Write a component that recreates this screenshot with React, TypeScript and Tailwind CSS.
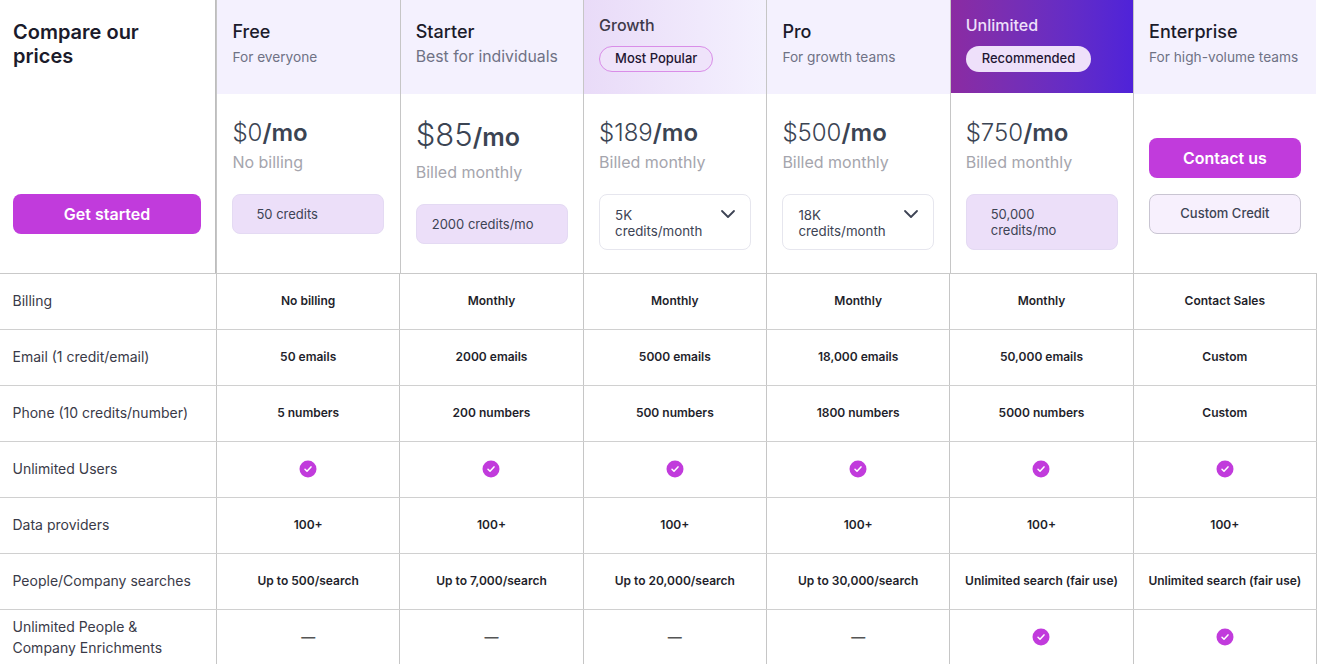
import { ChevronDown } from 'lucide-react';

interface Plan {
  name: string;
  sub?: string;
  badge?: string;
  price?: string;
  billing?: string;
  credits?: string;
  kind?: 'flat' | 'select';
  big?: boolean;
}

const plans: Plan[] = [
  { name: 'Free', sub: 'For everyone', price: '$0', billing: 'No billing', credits: '50 credits', kind: 'flat' },
  { name: 'Starter', sub: 'Best for individuals', price: '$85', billing: 'Billed monthly', credits: '2000 credits/mo', kind: 'flat', big: true },
  { name: 'Growth', badge: 'Most Popular', price: '$189', billing: 'Billed monthly', credits: '5K credits/month', kind: 'select' },
  { name: 'Pro', sub: 'For growth teams', price: '$500', billing: 'Billed monthly', credits: '18K credits/month', kind: 'select' },
  { name: 'Unlimited', badge: 'Recommended', price: '$750', billing: 'Billed monthly', credits: '50,000 credits/mo', kind: 'flat' },
  { name: 'Enterprise', sub: 'For high-volume teams' },
];

const CHECK = 'check';
const DASH = 'dash';

const rows: { label: string; cells: string[] }[] = [
  { label: 'Billing', cells: ['No billing', 'Monthly', 'Monthly', 'Monthly', 'Monthly', 'Contact Sales'] },
  { label: 'Email (1 credit/email)', cells: ['50 emails', '2000 emails', '5000 emails', '18,000 emails', '50,000 emails', 'Custom'] },
  { label: 'Phone (10 credits/number)', cells: ['5 numbers', '200 numbers', '500 numbers', '1800 numbers', '5000 numbers', 'Custom'] },
  { label: 'Unlimited Users', cells: [CHECK, CHECK, CHECK, CHECK, CHECK, CHECK] },
  { label: 'Data providers', cells: ['100+', '100+', '100+', '100+', '100+', '100+'] },
  { label: 'People/Company searches', cells: ['Up to 500/search', 'Up to 7,000/search', 'Up to 20,000/search', 'Up to 30,000/search', 'Unlimited search (fair use)', 'Unlimited search (fair use)'] },
  { label: 'Unlimited People & Company Enrichments', cells: [DASH, DASH, DASH, DASH, CHECK, CHECK] },
];

function CheckDot() {
  return (
    <svg width="18" height="18" viewBox="0 0 18 18">
      <circle cx="9" cy="9" r="8.5" fill="#c13bdc" />
      <path d="M6 9.3l2 2 4-4.4" fill="none" stroke="#fff" strokeWidth="1.5" strokeLinecap="round" strokeLinejoin="round" />
    </svg>
  );
}

function PlanBand({ plan }: { plan: Plan }) {
  if (plan.badge) {
    const dark = plan.name === 'Unlimited';
    return (
      <div
        className={
          dark
            ? 'h-[93px] mb-px pl-[15px] pr-[15.5px] pt-[15px] bg-gradient-to-r from-[#8b2ba2] to-[#4f22d9]'
            : 'h-[94px] pl-[15px] pr-[15.5px] pt-[15px] bg-gradient-to-r from-[#e9dbf8] to-[#f4f1fe]'
        }
      >
        <div className={dark ? 'text-base leading-[21px] font-medium text-[#eee0fa]' : 'text-base leading-[21px] font-medium text-[#3f3a4a]'}>
          {plan.name}
        </div>
        <div
          className={
            dark
              ? 'mt-[10px] inline-flex h-[26px] items-center rounded-full bg-[#eee0fa] px-4 text-[13px] font-medium text-[#1f1633]'
              : 'mt-[10px] inline-flex h-[26px] items-center rounded-full border border-[#d98de8] bg-[#efe3fa] px-[15px] text-[13px] font-medium text-[#1f1633]'
          }
        >
          {plan.badge}
        </div>
      </div>
    );
  }
  return (
    <div className="h-[94px] pl-[15px] pt-[20px] bg-[#f4f1fe]">
      <div className="text-lg leading-6 font-medium text-[#1b1b2b]">{plan.name}</div>
      <div className={plan.name === 'Starter' ? 'mt-[3px] text-[15.8px] leading-5 text-[#6f7285]' : 'mt-[3px] text-[13.7px] leading-5 whitespace-nowrap text-[#6f7285]'}>
        {plan.sub}
      </div>
    </div>
  );
}

function CreditBox({ plan }: { plan: Plan }) {
  if (plan.kind === 'select') {
    return (
      <div className="mt-[20px] flex h-14 items-start justify-between rounded-lg border border-[#e6e6ee] bg-white pl-[15px] pr-[10px] pt-3">
        <span className="w-[100px] text-[13.3px] leading-4 text-[#3d4354]">{plan.credits}</span>
        <ChevronDown size={24} strokeWidth={1.8} className="-mt-[5px] text-[#3d4354]" />
      </div>
    );
  }
  const tall = plan.name === 'Unlimited';
  return (
    <div
      className={
        tall
          ? 'mt-[20px] flex h-14 items-center rounded-lg border border-[#e4daf3] bg-[#ecdff9] pl-6 pr-6 text-[13px] leading-4 text-[#3d4354]'
          : 'mt-[20px] flex h-10 items-center rounded-lg border border-[#e4daf3] bg-[#ecdff9] text-[13px] leading-4 text-[#3d4354] ' +
            (plan.big ? 'pl-[15px]' : 'pl-[23px]')
      }
    >
      <span className={tall ? 'w-[80px]' : ''}>{plan.credits}</span>
    </div>
  );
}

function PlanColumn({ plan }: { plan: Plan }) {
  return (
    <div className="border-l border-[#c6c6c6]">
      <PlanBand plan={plan} />
      {plan.price ? (
        <div className="pl-[15px] pr-[15.5px]">
          <div
            className={
              plan.big
                ? 'pt-[20px] text-[31px] leading-[42px] font-light text-[#3b4453]'
                : 'pt-[23px] text-2xl leading-8 font-light text-[#3b4453]'
            }
          >
            {plan.price}
            <span className={plan.big ? 'text-[25px] font-semibold' : 'font-semibold'}>/mo</span>
          </div>
          <div className={plan.big ? 'mt-[2px] text-base leading-6 text-[#a5a5ad]' : 'mt-[1px] text-base leading-6 text-[#a5a5ad]'}>
            {plan.billing}
          </div>
          <CreditBox plan={plan} />
        </div>
      ) : (
        <div className="pl-[15px] pr-[15.5px] pt-11">
          <div className="flex h-10 items-center justify-center rounded-lg bg-[#c13bdc] text-base font-semibold text-white">
            Contact us
          </div>
          <div className="mt-4 flex h-10 items-center justify-center rounded-lg border border-[#c9c5d2] bg-[#f7f0fd] text-[13px] font-medium text-[#3d4354]">
            Custom Credit
          </div>
        </div>
      )}
    </div>
  );
}

export default function App() {
  return (
    <div className="h-[664px] overflow-hidden bg-white font-['Inter',sans-serif]">
      {/* Plan headers */}
      <div className="grid h-[274px] grid-cols-[216.4px_repeat(6,183.33px)] border-b border-[#c9c9c9]">
        <div className="flex flex-col justify-between border-r border-[#bdbdbd] pl-[13px] pb-[39px] pt-[20px]">
          <h1 className="w-[170px] text-xl leading-6 font-semibold text-[#1b1b2b]">Compare our prices</h1>
          <div className="flex h-10 w-[188px] items-center justify-center rounded-lg bg-[#c13bdc] text-base font-semibold text-white">
            Get started
          </div>
        </div>
        {plans.map((plan) => (
          <PlanColumn key={plan.name} plan={plan} />
        ))}
      </div>

      {/* Feature rows */}
      {rows.map((row) => (
        <div key={row.label} className="grid h-14 grid-cols-[217px_repeat(6,183.33px)] border-b border-[#d0d0d0]">
          <div className="flex items-center border-r border-[#c6c6c6] pb-[2px] pl-[12.5px] pr-4 text-sm leading-[21px] text-[#3a3a48]">
            {row.label}
          </div>
          {row.cells.map((cell, i) => (
            <div
              key={i}
              className="flex items-center justify-center border-r border-[#c6c6c6] pb-px text-xs font-semibold text-[#1f1f2c]"
            >
              {cell === CHECK ? <CheckDot /> : cell === DASH ? <span className="text-sm font-semibold text-[#555]">—</span> : cell}
            </div>
          ))}
        </div>
      ))}
    </div>
  );
}
